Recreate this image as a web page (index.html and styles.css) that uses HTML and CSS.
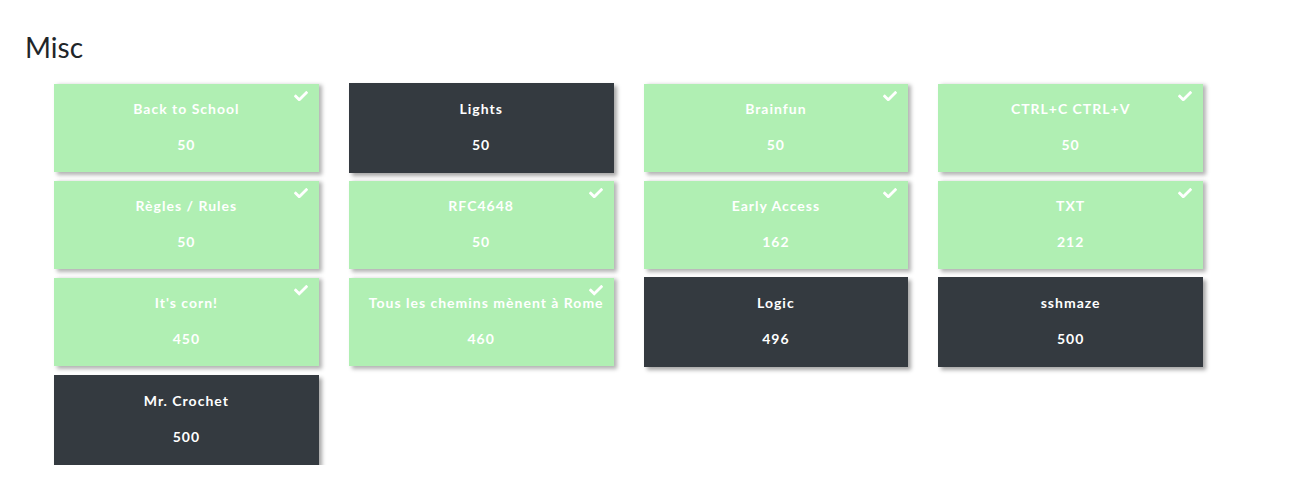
FILE: index.html
```html
<!DOCTYPE html>
<html lang="fr">
<head>
<meta charset="utf-8">
<title>Misc</title>
<link rel="stylesheet" href="styles.css">
</head>
<body>
<main class="page">
  <h1 class="cat-title">Misc</h1>
  <div class="grid">
    <div class="card solved"><svg class="check" viewBox="0 64 512 384"><path d="M173.898 439.404l-166.4-166.4c-9.997-9.997-9.997-26.206 0-36.204l36.203-36.204c9.997-9.998 26.207-9.998 36.204 0L192 312.69 432.095 72.596c9.997-9.997 26.207-9.997 36.204 0l36.203 36.204c9.997 9.997 9.997 26.206 0 36.204l-294.4 294.401c-9.998 9.997-26.207 9.997-36.204-.001z"/></svg><div class="name">Back to School</div><div class="pts">50</div></div>
    <div class="card"><div class="name">Lights</div><div class="pts">50</div></div>
    <div class="card solved"><svg class="check" viewBox="0 64 512 384"><path d="M173.898 439.404l-166.4-166.4c-9.997-9.997-9.997-26.206 0-36.204l36.203-36.204c9.997-9.998 26.207-9.998 36.204 0L192 312.69 432.095 72.596c9.997-9.997 26.207-9.997 36.204 0l36.203 36.204c9.997 9.997 9.997 26.206 0 36.204l-294.4 294.401c-9.998 9.997-26.207 9.997-36.204-.001z"/></svg><div class="name">Brainfun</div><div class="pts">50</div></div>
    <div class="card solved"><svg class="check" viewBox="0 64 512 384"><path d="M173.898 439.404l-166.4-166.4c-9.997-9.997-9.997-26.206 0-36.204l36.203-36.204c9.997-9.998 26.207-9.998 36.204 0L192 312.69 432.095 72.596c9.997-9.997 26.207-9.997 36.204 0l36.203 36.204c9.997 9.997 9.997 26.206 0 36.204l-294.4 294.401c-9.998 9.997-26.207 9.997-36.204-.001z"/></svg><div class="name">CTRL+C CTRL+V</div><div class="pts">50</div></div>
    <div class="card solved"><svg class="check" viewBox="0 64 512 384"><path d="M173.898 439.404l-166.4-166.4c-9.997-9.997-9.997-26.206 0-36.204l36.203-36.204c9.997-9.998 26.207-9.998 36.204 0L192 312.69 432.095 72.596c9.997-9.997 26.207-9.997 36.204 0l36.203 36.204c9.997 9.997 9.997 26.206 0 36.204l-294.4 294.401c-9.998 9.997-26.207 9.997-36.204-.001z"/></svg><div class="name">Règles / Rules</div><div class="pts">50</div></div>
    <div class="card solved"><svg class="check" viewBox="0 64 512 384"><path d="M173.898 439.404l-166.4-166.4c-9.997-9.997-9.997-26.206 0-36.204l36.203-36.204c9.997-9.998 26.207-9.998 36.204 0L192 312.69 432.095 72.596c9.997-9.997 26.207-9.997 36.204 0l36.203 36.204c9.997 9.997 9.997 26.206 0 36.204l-294.4 294.401c-9.998 9.997-26.207 9.997-36.204-.001z"/></svg><div class="name">RFC4648</div><div class="pts">50</div></div>
    <div class="card solved"><svg class="check" viewBox="0 64 512 384"><path d="M173.898 439.404l-166.4-166.4c-9.997-9.997-9.997-26.206 0-36.204l36.203-36.204c9.997-9.998 26.207-9.998 36.204 0L192 312.69 432.095 72.596c9.997-9.997 26.207-9.997 36.204 0l36.203 36.204c9.997 9.997 9.997 26.206 0 36.204l-294.4 294.401c-9.998 9.997-26.207 9.997-36.204-.001z"/></svg><div class="name">Early Access</div><div class="pts">162</div></div>
    <div class="card solved"><svg class="check" viewBox="0 64 512 384"><path d="M173.898 439.404l-166.4-166.4c-9.997-9.997-9.997-26.206 0-36.204l36.203-36.204c9.997-9.998 26.207-9.998 36.204 0L192 312.69 432.095 72.596c9.997-9.997 26.207-9.997 36.204 0l36.203 36.204c9.997 9.997 9.997 26.206 0 36.204l-294.4 294.401c-9.998 9.997-26.207 9.997-36.204-.001z"/></svg><div class="name">TXT</div><div class="pts">212</div></div>
    <div class="card solved"><svg class="check" viewBox="0 64 512 384"><path d="M173.898 439.404l-166.4-166.4c-9.997-9.997-9.997-26.206 0-36.204l36.203-36.204c9.997-9.998 26.207-9.998 36.204 0L192 312.69 432.095 72.596c9.997-9.997 26.207-9.997 36.204 0l36.203 36.204c9.997 9.997 9.997 26.206 0 36.204l-294.4 294.401c-9.998 9.997-26.207 9.997-36.204-.001z"/></svg><div class="name">It's corn!</div><div class="pts">450</div></div>
    <div class="card solved"><svg class="check" viewBox="0 64 512 384"><path d="M173.898 439.404l-166.4-166.4c-9.997-9.997-9.997-26.206 0-36.204l36.203-36.204c9.997-9.998 26.207-9.998 36.204 0L192 312.69 432.095 72.596c9.997-9.997 26.207-9.997 36.204 0l36.203 36.204c9.997 9.997 9.997 26.206 0 36.204l-294.4 294.401c-9.998 9.997-26.207 9.997-36.204-.001z"/></svg><div class="name">Tous les chemins mènent à Rome</div><div class="pts">460</div></div>
    <div class="card"><div class="name">Logic</div><div class="pts">496</div></div>
    <div class="card"><div class="name">sshmaze</div><div class="pts">500</div></div>
    <div class="card"><div class="name">Mr. Crochet</div><div class="pts">500</div></div>
  </div>
</main>
</body>
</html>
```

FILE: styles.css
```css
html, body {
  margin: 0;
  padding: 0;
  background: #ffffff;
}

.page {
  padding: 31px 0 0 25px;
  font-family: Lato, "Liberation Sans", sans-serif;
  color: #212529;
}

.cat-title {
  margin: 0;
  font-size: 28px;
  font-weight: 400;
  line-height: 1.2;
}

.grid {
  margin: 18px 0 0 29px;
  display: grid;
  grid-template-columns: repeat(4, 264.75px);
  column-gap: 30px;
  row-gap: 7.33px;
}

.card {
  position: relative;
  box-sizing: border-box;
  height: 90px;
  padding: 15px 20px 0;
  background: #343a40;
  border: 1px solid #343a40;
  border-left-width: 0;
  border-right-width: 0;
  box-shadow: 3px 3px 4px rgba(0, 0, 0, 0.35);
  color: #ffffff;
  text-align: center;
  font-weight: 700;
  font-size: 14px;
  letter-spacing: 1px;
  line-height: 20px;
}

.card.solved {
  background: #b0efb3;
  background-clip: padding-box;
  border-color: transparent;
  box-shadow: 3px 2px 4px rgba(0, 0, 0, 0.3);
}

.name {
  white-space: nowrap;
}

.pts {
  margin-top: 16px;
}

.check {
  position: absolute;
  top: 7px;
  right: 11px;
  width: 14px;
  height: 10.5px;
  fill: #ffffff;
}
```
